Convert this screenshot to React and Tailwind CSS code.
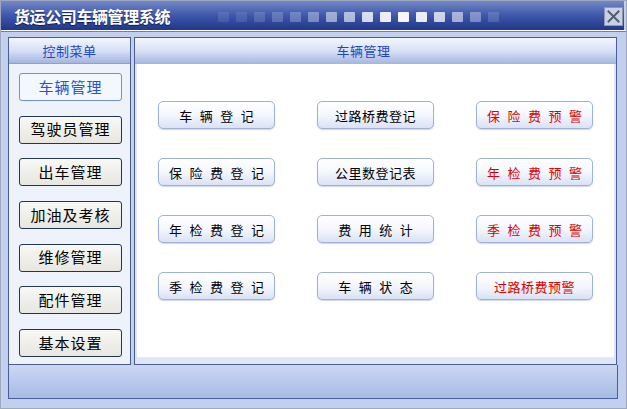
import React from "react";

const FONT = { fontFamily: '"Noto Sans CJK SC", "Noto Sans", sans-serif' };

const squares = [
  "bg-white/10", "bg-white/10", "bg-white/15", "bg-white/20", "bg-white/25", "bg-white/35",
  "bg-white/50", "bg-white/60", "bg-white/80", "bg-white/90", "bg-white/95", "bg-white/90",
  "bg-white/75", "bg-white/55", "bg-white/35", "bg-white/15",
];

const menu = ["车辆管理", "驾驶员管理", "出车管理", "加油及考核", "维修管理", "配件管理", "基本设置"];

const grid = [
  [{ t: "车辆登记", s: true }, { t: "过路桥费登记" }, { t: "保险费预警", s: true, r: true }],
  [{ t: "保险费登记", s: true }, { t: "公里数登记表" }, { t: "年检费预警", s: true, r: true }],
  [{ t: "年检费登记", s: true }, { t: "费用统计", s: true }, { t: "季检费预警", s: true, r: true }],
  [{ t: "季检费登记", s: true }, { t: "车辆状态", s: true }, { t: "过路桥费预警", r: true }],
];

function GridButton({ t, s, r }) {
  return (
    <div
      className={
        "w-[117px] h-[28px] rounded-[5px] border border-[#9fb1d9] bg-linear-to-b from-white via-[#f4f7fd] to-[#d9e2f5] shadow-[0_1px_1px_rgba(120,140,190,0.35)] flex items-center justify-center text-[13px] leading-none " +
        (r ? "text-[#e00000] " : "text-black ") +
        (s ? "tracking-[7.5px] pl-[7.5px]" : "tracking-[0.5px]")
      }
    >
      {t}
    </div>
  );
}

export default function App() {
  return (
    <div style={FONT} className="w-[627px] h-[409px] flex flex-col bg-[#c3cfee] border border-[#9ea8bf] overflow-hidden">
      {/* Title bar */}
      <div className="h-[29px] mr-[2px] flex items-center bg-linear-to-b from-[#7488c6] via-[#3e57aa] to-[#213789]">
        <div className="pl-[13px] text-white font-bold text-[16px] leading-none tracking-[-0.4px] [text-shadow:0_1px_1px_rgba(0,0,30,0.6)]">
          货运公司车辆管理系统
        </div>
        <div className="ml-[48px] flex gap-[7px] mt-[2px]">
          {squares.map((c, i) => (
            <div key={i} className={"w-[11px] h-[10px] rounded-[1px] blur-[0.5px] " + c} />
          ))}
        </div>
        <div className="ml-auto mr-[1px] w-[19px] h-[19px] mt-[2px] bg-[#c9d1e6] border border-[#8d97b3] flex items-center justify-center">
          <svg width="13" height="13" viewBox="0 0 13 13">
            <path d="M1.5 1.5 L11.5 11.5 M11.5 1.5 L1.5 11.5" stroke="#555d70" strokeWidth="2" strokeLinecap="square" />
          </svg>
        </div>
      </div>
      <div className="h-[1px] bg-white" />
      <div className="h-[1px] bg-[#6d7fb2]" />

      {/* Body */}
      <div className="flex flex-col pl-[7px] pt-[5px]">
        <div className="flex gap-[3px] h-[328px]">
          {/* Left panel */}
          <div className="w-[123px] flex flex-col border border-[#4a5d96] bg-[#eef2fb]">
            <div className="h-[26px] flex items-center justify-center bg-linear-to-b from-[#f3f6fd] via-[#d7e0f5] to-[#a4b5df] border-b border-[#8ea0d0] text-[13px] text-[#1f47c2] tracking-[0.5px]">
              控制菜单
            </div>
            <div className="flex flex-col gap-[14.67px] pt-[9px] pl-[10px]">
              {menu.map((m, i) =>
                i === 0 ? (
                  <div
                    key={m}
                    className="w-[103px] h-[28px] rounded-[3px] border border-[#7390d6] bg-[#f3f7fe] flex items-center justify-center text-[15px] text-[#2356cc] tracking-[1px]"
                  >
                    {m}
                  </div>
                ) : (
                  <div
                    key={m}
                    className="w-[103px] h-[28px] rounded-[3px] border border-[#223650] bg-linear-to-b from-[#f8f8f5] to-[#e7e6e0] flex items-center justify-center text-[15px] text-black tracking-[1px]"
                  >
                    {m}
                  </div>
                )
              )}
            </div>
          </div>

          {/* Main panel */}
          <div className="w-[483px] flex flex-col border border-[#4a5d96] bg-[#dde5f6]">
            <div className="h-[26px] flex items-center justify-center pr-[24px] bg-linear-to-b from-[#f3f6fd] via-[#d7e0f5] to-[#a4b5df] text-[13px] text-[#1f47c2] tracking-[0.5px]">
              车辆管理
            </div>
            <div className="flex-1 px-[2px] pb-[6px]">
              <div className="h-full bg-white border-b border-[#e6ebf6] flex flex-col gap-[29px] pt-[37px] pl-[21px]">
                {grid.map((row, ri) => (
                  <div key={ri} className="flex gap-[42px]">
                    {row.map((b) => (
                      <GridButton key={b.t} {...b} />
                    ))}
                  </div>
                ))}
              </div>
            </div>
          </div>
        </div>
        {/* Bottom strip */}
        <div className="w-[610px] h-[34px] border-x border-b border-[#4a5d96] bg-linear-to-b from-[#ccd8f2] to-[#a7bae4]" />
      </div>
    </div>
  );
}
